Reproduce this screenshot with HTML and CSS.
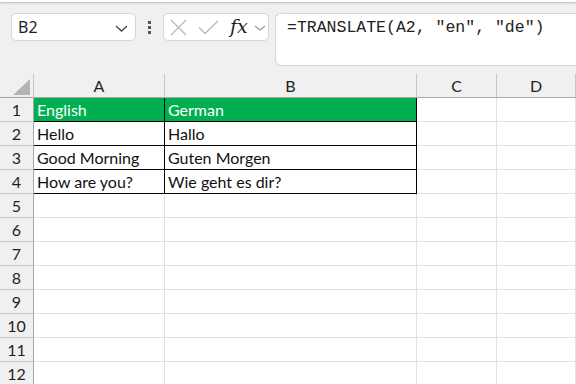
FILE: index.html
```html
<!DOCTYPE html>
<html lang="en">
<head>
  <meta charset="UTF-8" />
  <title>Book1 - Excel</title>
  <link rel="stylesheet" href="styles.css">
</head>
<body>

<div class="ribbon-edge"></div>

<div class="formula-bar">
  <div class="name-box">
    <span class="name-text">B2</span>
    <svg class="chev" width="13" height="7" viewBox="0 0 13 7"><path d="M1 1 L6.5 6 L12 1" fill="none" stroke="#444" stroke-width="1.3"/></svg>
  </div>
  <div class="grip">
    <span></span><span></span><span></span>
  </div>
  <div class="fx-box">
    <svg class="ico" width="17" height="17" viewBox="0 0 17 17"><path d="M1 1 L16 16 M16 1 L1 16" stroke="#b8b8b8" stroke-width="1.4" fill="none"/></svg>
    <svg class="ico" width="21" height="15" viewBox="0 0 21 15"><path d="M1 7.5 L7 13.5 L20 1" stroke="#b8b8b8" stroke-width="1.4" fill="none"/></svg>
    <span class="fx">fx</span>
    <svg class="chev-small" width="12" height="6" viewBox="0 0 12 6"><path d="M1 1 L6 5 L11 1" fill="none" stroke="#999" stroke-width="1.2"/></svg>
  </div>
  <div class="formula">=TRANSLATE(A2, "en", "de")</div>
</div>

<div class="sheet">
  <div class="corner">
    <svg width="17" height="16" viewBox="0 0 17 16"><polygon points="17,0 17,16 0,16" fill="#b4b4b4"/></svg>
  </div>
  <div class="ch">A</div>
  <div class="ch">B</div>
  <div class="ch">C</div>
  <div class="ch">D</div>

  <div class="rh">1</div>
  <div class="cell tb head">English</div>
  <div class="cell tb head">German</div>
  <div class="cell"></div>
  <div class="cell"></div>

  <div class="rh">2</div>
  <div class="cell tb">Hello</div>
  <div class="cell tb">Hallo</div>
  <div class="cell"></div>
  <div class="cell"></div>

  <div class="rh">3</div>
  <div class="cell tb">Good Morning</div>
  <div class="cell tb">Guten Morgen</div>
  <div class="cell"></div>
  <div class="cell"></div>

  <div class="rh">4</div>
  <div class="cell tb">How are you?</div>
  <div class="cell tb">Wie geht es dir?</div>
  <div class="cell"></div>
  <div class="cell"></div>

  <div class="rh">5</div><div class="cell"></div><div class="cell"></div><div class="cell"></div><div class="cell"></div>
  <div class="rh">6</div><div class="cell"></div><div class="cell"></div><div class="cell"></div><div class="cell"></div>
  <div class="rh">7</div><div class="cell"></div><div class="cell"></div><div class="cell"></div><div class="cell"></div>
  <div class="rh">8</div><div class="cell"></div><div class="cell"></div><div class="cell"></div><div class="cell"></div>
  <div class="rh">9</div><div class="cell"></div><div class="cell"></div><div class="cell"></div><div class="cell"></div>
  <div class="rh">10</div><div class="cell"></div><div class="cell"></div><div class="cell"></div><div class="cell"></div>
  <div class="rh">11</div><div class="cell"></div><div class="cell"></div><div class="cell"></div><div class="cell"></div>
  <div class="rh">12</div><div class="cell"></div><div class="cell"></div><div class="cell"></div><div class="cell"></div>
</div>

</body>
</html>
```

FILE: styles.css
```css
html, body {
  margin: 0;
  height: 100%;
  overflow: hidden;
}
body {
  font-family: Lato, "Noto Sans", sans-serif;
  background: #f0f0f0;
  color: #1f1f1f;
}
.ribbon-edge {
  height: 2px;
  background: #fff;
  box-shadow: 0 1px 2px rgba(0,0,0,0.25);
}
.formula-bar {
  display: flex;
  align-items: flex-start;
  padding: 11px 0 0 11px;
  height: 61px;
}
.name-box {
  width: 125px;
  height: 28px;
  box-sizing: border-box;
  background: #fff;
  border: 1px solid #d6d6d6;
  border-radius: 5px;
  display: flex;
  align-items: center;
  justify-content: space-between;
  padding: 0 7px 0 6px;
}
.name-text {
  font-family: "Noto Sans", sans-serif;
  font-size: 16px;
  color: #1f1f1f;
}
.chev {
  margin-top: 2px;
}
.grip {
  width: 27px;
  height: 28px;
  display: flex;
  flex-direction: column;
  align-items: center;
  justify-content: center;
  gap: 2px;
}
.grip span {
  width: 3px;
  height: 3px;
  background: #555;
}
.fx-box {
  width: 106px;
  height: 28px;
  box-sizing: border-box;
  background: #fff;
  border: 1px solid #d6d6d6;
  border-radius: 5px;
  display: flex;
  align-items: center;
  padding-left: 6px;
}
.ico {
  margin-right: 11px;
}
.fx {
  font-family: "DejaVu Serif", "Liberation Serif", serif;
  font-style: italic;
  font-size: 19px;
  color: #222;
  margin: -3px 6px 0 0;
}
.chev-small {
  margin-top: 2px;
}
.formula {
  flex: 1;
  margin-left: 6px;
  height: 53px;
  box-sizing: border-box;
  background: #fff;
  border: 1px solid #d6d6d6;
  border-right: none;
  border-radius: 6px 0 0 6px;
  padding: 4px 0 0 11px;
  font-family: "Liberation Mono", "DejaVu Sans Mono", monospace;
  font-size: 16.5px;
  color: #222;
}
.sheet {
  display: grid;
  grid-template-columns: 34px 131px 252px 80px 1fr;
  grid-template-rows: 24px repeat(12, 24px);
}
.corner {
  background: #f0f0f0;
  border-right: 1px solid #c6c6c6;
  border-bottom: 1px solid #a8a8a8;
  display: flex;
  align-items: flex-end;
  justify-content: flex-end;
  padding: 0 3px 2px 0;
}
.ch {
  background: #f0f0f0;
  border-right: 1px solid #c6c6c6;
  border-bottom: 1px solid #a8a8a8;
  font-size: 16px;
  text-align: center;
  line-height: 24px;
  color: #1f1f1f;
}
.rh {
  background: #f0f0f0;
  border-right: 1px solid #a8a8a8;
  border-bottom: 1px solid #c8c8c8;
  font-size: 16px;
  text-align: center;
  line-height: 24px;
  color: #1f1f1f;
}
.cell {
  background: #fff;
  border-right: 1px solid #e1e1e1;
  border-bottom: 1px solid #e1e1e1;
  font-size: 16px;
  line-height: 24px;
  padding-left: 3px;
  white-space: nowrap;
  color: #111;
}
.cell.tb {
  border-right-color: #000;
  border-bottom-color: #000;
}
.cell.head {
  background: #00b050;
  color: #fff;
}
```
